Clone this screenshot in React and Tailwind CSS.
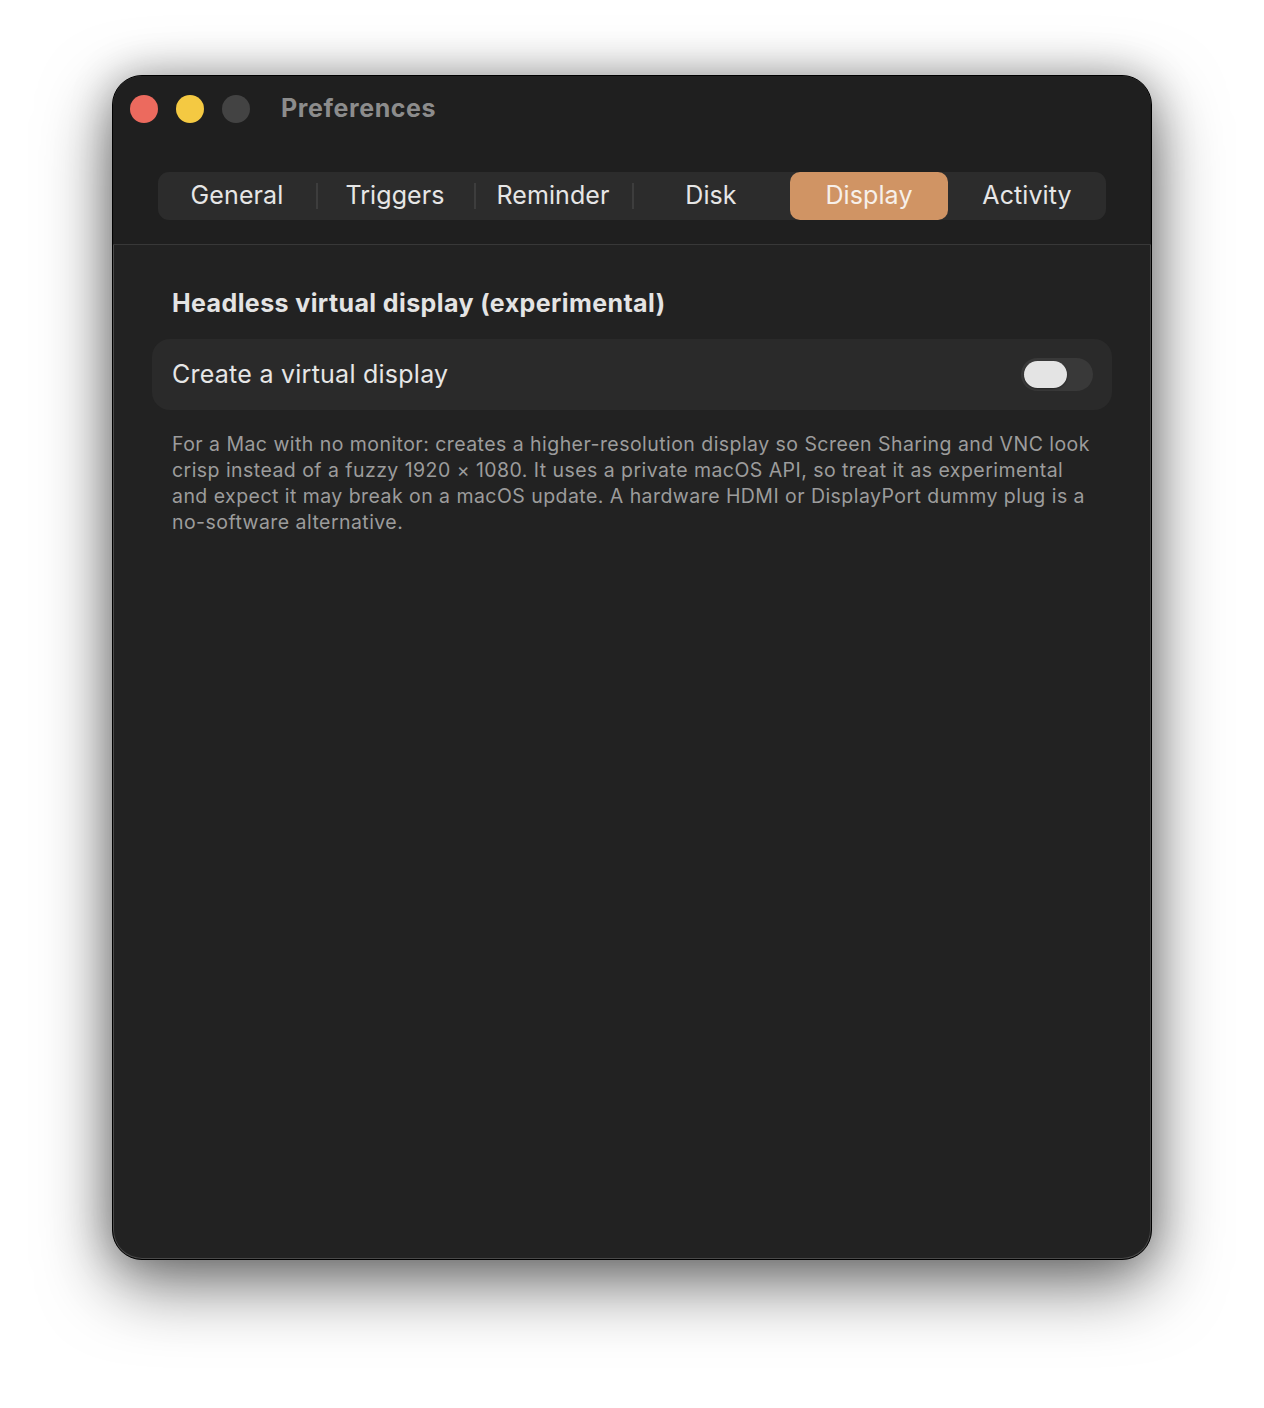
import React, { useState } from 'react'

const tabs = ['General', 'Triggers', 'Reminder', 'Disk', 'Display', 'Activity']

function Toggle({ on, onChange }) {
  return (
    <button
      onClick={() => onChange(!on)}
      className={`relative w-[72px] h-[33px] rounded-full ${on ? 'bg-[#d09464]' : 'bg-[#393939]'}`}
    >
      <span
        className={`absolute top-[3px] h-[27px] w-[43px] rounded-full bg-[#e4e4e4] shadow-[0_1px_2px_rgba(0,0,0,0.4)] ${on ? 'left-[26px]' : 'left-[3px]'}`}
      />
    </button>
  )
}

export default function App() {
  const [active, setActive] = useState('Display')
  const [virtualDisplay, setVirtualDisplay] = useState(false)

  const activeIdx = tabs.indexOf(active)

  return (
    <div
      className="min-h-[1408px] bg-white flex justify-center pt-[75px]"
      style={{ fontFamily: 'Inter, "Noto Sans", sans-serif' }}
    >
      <div className="w-[1040px] h-[1185px] rounded-[30px] bg-[#222222] border border-black shadow-[inset_0_0_0_1px_#4a4a4a,0_24px_70px_rgba(0,0,0,0.55),0_0_40px_rgba(0,0,0,0.25)] overflow-hidden flex flex-col">
        {/* Title bar + tab strip */}
        <div className="h-[169px] bg-[#1f1f1f] border-b border-[#383838] flex flex-col">
          <div className="flex items-center h-[66px] pl-[17px]">
            <div className="flex gap-[18px]">
              <span className="w-[28px] h-[28px] rounded-full bg-[#ec6a5e]" />
              <span className="w-[28px] h-[28px] rounded-full bg-[#f4c942]" />
              <span className="w-[28px] h-[28px] rounded-full bg-[#434343]" />
            </div>
            <span className="ml-[31px] text-[25px] font-bold text-[#8c8c8c] tracking-[0.6px]">Preferences</span>
          </div>

          <div className="mt-[30px] mx-[45px] h-[48px] rounded-[11px] bg-[#2c2c2c] flex items-stretch">
            {tabs.map((t, i) => {
              const selected = t === active
              const showDivider = i > 0 && i !== activeIdx && i - 1 !== activeIdx
              return (
                <div key={t} className="flex-1 relative flex">
                  {showDivider && (
                    <span className="absolute left-0 top-[11px] bottom-[11px] w-[2px] bg-[#3d3d3d]" />
                  )}
                  <button
                    onClick={() => setActive(t)}
                    className={`flex-1 rounded-[10px] text-[25px] tracking-[0.1px] ${selected ? 'bg-[#d09464] text-[#f7f0ea]' : 'text-[#e6e6e6]'}`}
                  >
                    {t}
                  </button>
                </div>
              )
            })}
          </div>
        </div>

        {/* Display pane */}
        <div className="px-[39px] pt-[41px]">
          <h2 className="pl-[20px] text-[25px] font-bold text-[#e4e4e4] leading-[34px] tracking-[0.4px]">
            Headless virtual display (experimental)
          </h2>

          <div className="mt-[19px] h-[71px] rounded-[18px] bg-[#2a2a2a] flex items-center justify-between pl-[20px] pr-[19px]">
            <span className="text-[25px] text-[#e6e6e6] tracking-[0.25px]">Create a virtual display</span>
            <Toggle on={virtualDisplay} onChange={setVirtualDisplay} />
          </div>

          <p className="mt-[21px] pl-[20px] text-[19.5px] leading-[26px] text-[#9c9c9c] tracking-[0.45px]">
            For a Mac with no monitor: creates a higher-resolution display so Screen Sharing and VNC look
            <br />
            crisp instead of a fuzzy 1920 × 1080. It uses a private macOS API, so treat it as experimental
            <br />
            and expect it may break on a macOS update. A hardware HDMI or DisplayPort dummy plug is a
            <br />
            no-software alternative.
          </p>
        </div>
      </div>
    </div>
  )
}
